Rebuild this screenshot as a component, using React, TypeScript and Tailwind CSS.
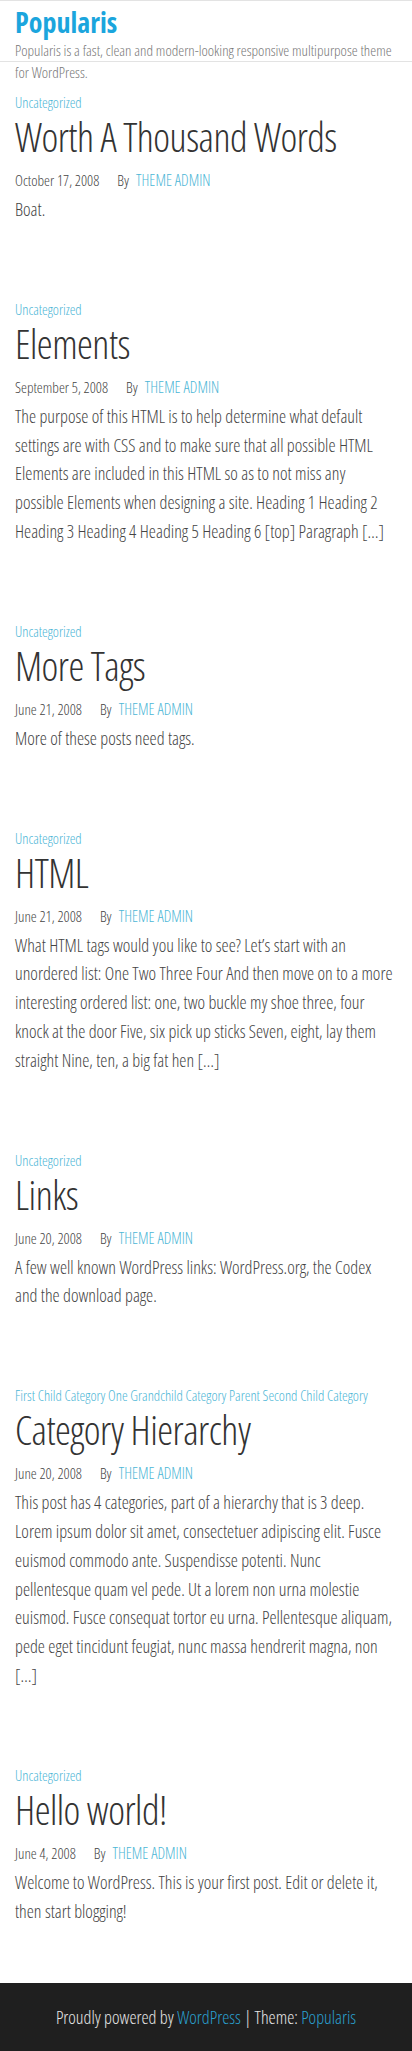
const posts = [
  {
    cats: ["Uncategorized"],
    title: "Worth A Thousand Words",
    date: "October 17, 2008",
    body: "Boat.",
  },
  {
    cats: ["Uncategorized"],
    title: "Elements",
    date: "September 5, 2008",
    body: "The purpose of this HTML is to help determine what default settings are with CSS and to make sure that all possible HTML Elements are included in this HTML so as to not miss any possible Elements when designing a site. Heading 1 Heading 2 Heading 3 Heading 4 Heading 5 Heading 6 [top] Paragraph […]",
  },
  {
    cats: ["Uncategorized"],
    title: "More Tags",
    date: "June 21, 2008",
    body: "More of these posts need tags.",
  },
  {
    cats: ["Uncategorized"],
    title: "HTML",
    date: "June 21, 2008",
    body: "What HTML tags would you like to see? Let’s start with an unordered list: One Two Three Four And then move on to a more interesting ordered list: one, two buckle my shoe three, four knock at the door Five, six pick up sticks Seven, eight, lay them straight Nine, ten, a big fat hen […]",
  },
  {
    cats: ["Uncategorized"],
    title: "Links",
    date: "June 20, 2008",
    body: "A few well known WordPress links: WordPress.org, the Codex and the download page.",
  },
  {
    cats: ["First Child Category", "One", "Grandchild Category", "Parent", "Second Child Category"],
    title: "Category Hierarchy",
    date: "June 20, 2008",
    body: "This post has 4 categories, part of a hierarchy that is 3 deep. Lorem ipsum dolor sit amet, consectetuer adipiscing elit. Fusce euismod commodo ante. Suspendisse potenti. Nunc pellentesque quam vel pede. Ut a lorem non urna molestie euismod. Fusce consequat tortor eu urna. Pellentesque aliquam, pede eget tincidunt feugiat, nunc massa hendrerit magna, non […]",
  },
  {
    cats: ["Uncategorized"],
    title: "Hello world!",
    date: "June 4, 2008",
    body: "Welcome to WordPress. This is your first post. Edit or delete it, then start blogging!",
  },
];

function Post({ p }: { p: (typeof posts)[number] }) {
  return (
    <article className="mb-[76px] last:mb-0">
      <div className="text-[14.5px] leading-[20px] text-[#4cb6d6]">
        {p.cats.map((c, i) => (
          <span key={c}>
            {i > 0 && " "}
            <a href="#">{c}</a>
          </span>
        ))}
      </div>
      <h2 className="text-[40px] leading-[48px] font-light tracking-[-0.5px] text-[#333]">{p.title}</h2>
      <div className="mt-[9px] flex items-center text-[15px] leading-[20px] text-[#444]">
        <span>{p.date}</span>
        <span className="ml-[18px]">By</span>
        <a href="#" className="ml-[7px] text-[15.5px] text-[#4cb6d6]">THEME ADMIN</a>
      </div>
      <p className="mt-[5px] text-[18px] leading-[28.8px] text-[#444]">{p.body}</p>
    </article>
  );
}

export default function App() {
  return (
    <div className="min-h-screen bg-white font-['Open_Sans',sans-serif] font-light font-stretch-condensed">
      <header className="h-[62px] border-t border-b border-[#e3e3e3] px-[15px] pt-[4px]">
        <h1 className="text-[28px] leading-[34px] font-bold text-[#1ba5dd]">Popularis</h1>
        <p className="text-[15px] leading-[22px] text-[#777]">
          Popularis is a fast, clean and modern-looking responsive multipurpose theme for WordPress.
        </p>
      </header>
      <main className="px-[15px] pt-[31px]">
        {posts.map((p) => (
          <Post key={p.title} p={p} />
        ))}
      </main>
      <footer className="mt-[58px] flex h-[69px] items-center justify-center bg-[#1f1f1f] text-[18px] text-[#e6e6e6]">
        <span>
          Proudly powered by <a href="#" className="text-[#2a9fce]">WordPress</a> | Theme:{" "}
          <a href="#" className="text-[#2a9fce]">Popularis</a>
        </span>
      </footer>
    </div>
  );
}
